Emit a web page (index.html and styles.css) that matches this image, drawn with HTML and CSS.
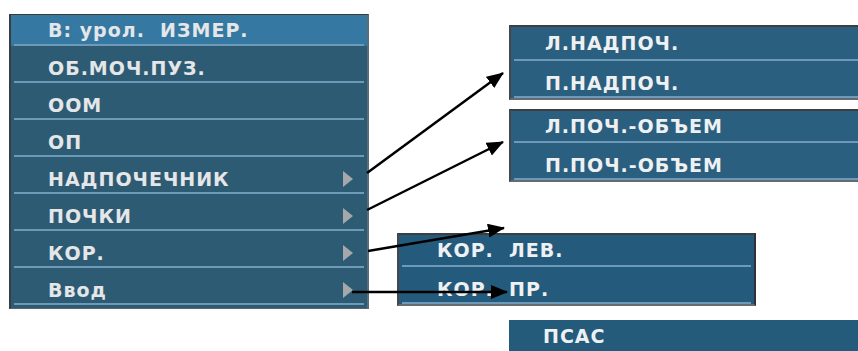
FILE: index.html
```html
<!DOCTYPE html>
<html lang="ru">
<head>
<meta charset="utf-8">
<title>Меню</title>
<link rel="stylesheet" href="styles.css">
</head>
<body>
<div class="canvas">
  <div class="menu main-menu">
    <div class="item first active"><span class="label">В: урол.  ИЗМЕР.</span></div>
    <div class="item"><span class="label">ОБ.МОЧ.ПУЗ.</span></div>
    <div class="item"><span class="label">ООМ</span></div>
    <div class="item"><span class="label">ОП</span></div>
    <div class="item"><span class="label">НАДПОЧЕЧНИК</span><span class="tri"></span></div>
    <div class="item"><span class="label">ПОЧКИ</span><span class="tri"></span></div>
    <div class="item"><span class="label">КОР.</span><span class="tri"></span></div>
    <div class="item"><span class="label">Ввод</span><span class="tri"></span></div>
  </div>
  <div class="side">
    <div class="menu sub sub-nad">
      <div class="item first tall"><span class="label">Л.НАДПОЧ.</span></div>
      <div class="item"><span class="label">П.НАДПОЧ.</span></div>
    </div>
    <div class="menu sub sub-poch">
      <div class="item first"><span class="label">Л.ПОЧ.-ОБЪЕМ</span></div>
      <div class="item"><span class="label">П.ПОЧ.-ОБЪЕМ</span></div>
    </div>
    <div class="menu sub sub-kor">
      <div class="item first"><span class="label">КОР.  ЛЕВ.</span></div>
      <div class="item"><span class="label">КОР.  ПР.</span></div>
    </div>
    <div class="psas"><span class="label">ПСАС</span></div>
  </div>
  <svg class="arrows" width="858" height="351" viewBox="0 0 858 351">
    <defs>
      <marker id="head" markerUnits="userSpaceOnUse" markerWidth="18" markerHeight="16" refX="16" refY="7" orient="auto">
        <path d="M0,0 L17,7 L0,14 Z" fill="#000"/>
      </marker>
    </defs>
    <g stroke="#000" stroke-width="2.5" fill="none" marker-end="url(#head)">
      <line x1="367" y1="173" x2="503" y2="73"/>
      <line x1="367" y1="210" x2="503" y2="142"/>
      <line x1="368" y1="251" x2="504" y2="228"/>
      <line x1="352" y1="292" x2="507" y2="292"/>
    </g>
  </svg>
</div>
</body>
</html>
```
FILE: styles.css
```css
html, body {
  margin: 0;
  padding: 0;
  background: #ffffff;
}
body {
  width: 858px;
  height: 351px;
  overflow: hidden;
  font-family: "DejaVu Sans", "Verdana", sans-serif;
}
.canvas {
  position: relative;
  display: flex;
  align-items: flex-start;
  width: 858px;
  height: 351px;
}
.menu {
  display: flex;
  flex-direction: column;
  box-sizing: border-box;
  flex-shrink: 0;
}
.main-menu {
  margin: 14px 0 0 9px;
  width: 360px;
  background: #2e5b74;
  border-top: 1px solid #3a3a3a;
  border-left: 2px solid #3a3e42;
  border-right: 2px solid #5c6c76;
  border-bottom: 1px solid #5e6468;
  padding-bottom: 3px;
}
.item {
  display: flex;
  align-items: center;
  box-sizing: border-box;
  height: 37px;
  padding: 8px 0 2px 37px;
  background-image: linear-gradient(#6d9ab8, #6d9ab8);
  background-size: calc(100% - 6px) 2px;
  background-position: center bottom;
  background-repeat: no-repeat;
}
.item.first {
  height: 32px;
  padding-top: 0;
}
.main-menu .item.first {
  height: 31px;
}
.item.active {
  background-color: #3579a3;
}
.label {
  flex: 1;
  white-space: pre;
  font-size: 19px;
  font-weight: bold;
  letter-spacing: 1px;
  line-height: 20px;
  color: #e4e6e8;
}
.tri {
  width: 0;
  height: 0;
  margin-right: 14px;
  border-top: 8px solid transparent;
  border-bottom: 8px solid transparent;
  border-left: 10px solid #a4a8ab;
}
.side {
  display: flex;
  flex-direction: column;
  align-items: flex-start;
  margin: 25px 0 0 28px;
  width: 461px;
  flex-shrink: 0;
}
.sub {
  background: #2b5f7f;
  border-top: 2px solid #3c3f42;
  border-bottom: 2px solid #666b70;
  border-left: 2px solid #44484c;
}
.sub .item {
  padding-left: 34px;
}
.sub .label {
  color: #eef0f2;
}
.sub-nad {
  margin-left: 112px;
  width: 360px;
}
.sub-nad .item.tall {
  height: 34px;
}
.sub-poch {
  margin: 9px 0 0 112px;
  width: 360px;
}
.sub-kor {
  margin-top: 51px;
  width: 359px;
  background: #245b7d;
  border-right: 2px solid #2e3236;
}
.sub-kor .item {
  padding-left: 38px;
}
.psas {
  display: flex;
  align-items: center;
  box-sizing: border-box;
  margin: 14px 0 0 112px;
  width: 360px;
  height: 32px;
  padding-left: 34px;
  background: #245b7b;
}
.psas .label {
  color: #eef0f2;
}
.arrows {
  position: absolute;
  left: 0;
  top: 0;
  pointer-events: none;
}
```
